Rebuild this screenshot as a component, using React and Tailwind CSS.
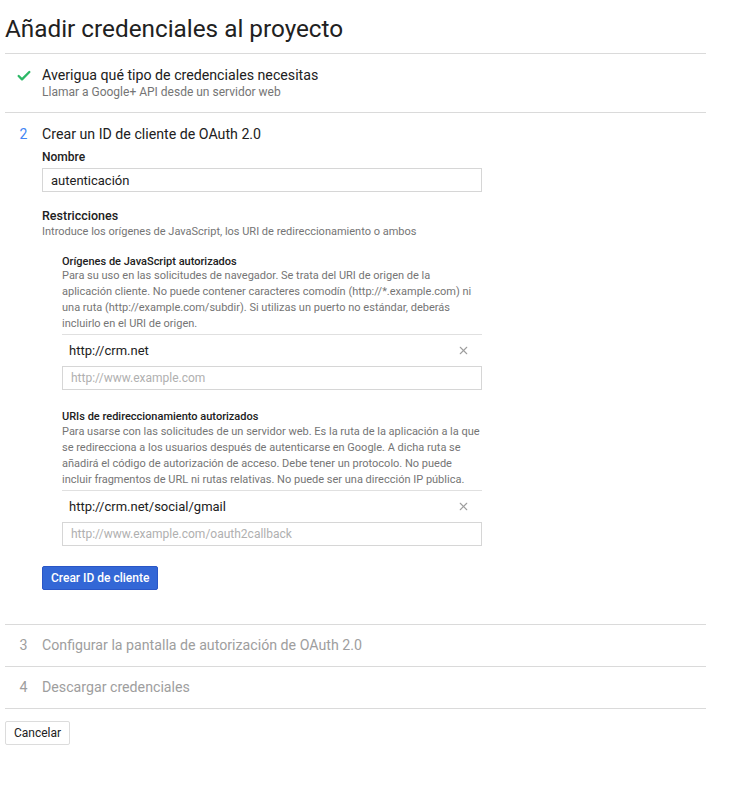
import { Check, X } from "lucide-react";

function UriList({ title, desc, value, placeholder, descGap }) {
  return (
    <div>
      <div className="text-[11px] font-medium text-[#212121] leading-[12px]">{title}</div>
      <p className={`text-[11px] text-[#757575] leading-[16px] ${descGap}`}>{desc}</p>
      <div className="mt-[2px] border-t border-[#e0e0e0] flex items-center justify-between h-[32px] pl-[7px] pr-[12px]">
        <span className="text-[13px] text-[#212121]">{value}</span>
        <X className="w-[13px] h-[13px] text-[#9e9e9e]" strokeWidth={2} />
      </div>
      <input
        className="block w-full h-[24px] border border-[#d6d6d6] px-[8px] text-[12px] outline-none placeholder:text-[#b0b0b0]"
        placeholder={placeholder}
      />
    </div>
  );
}

export default function App() {
  return (
    <div className="w-[737px] min-h-[787px] bg-white text-[#212121]" style={{ fontFamily: "Roboto, sans-serif" }}>
      <div className="w-[701px] ml-[5px]">
        <h1 className="text-[24.3px] leading-[28px] pt-[15px] pb-[10px] text-[#212121]">Añadir credenciales al proyecto</h1>

        <div className="border-t border-[#dadada] flex pt-[12px] pb-[11px]">
          <div className="w-[37px] flex justify-center pt-[2px]">
            <Check className="w-[16px] h-[16px] text-[#2cb866]" strokeWidth={3.5} />
          </div>
          <div>
            <div className="text-[14.2px] leading-[18px]">Averigua qué tipo de credenciales necesitas</div>
            <div className="text-[12px] leading-[17px] text-[#757575]">Llamar a Google+ API desde un servidor web</div>
          </div>
        </div>

        <div className="border-t border-[#dadada] flex pt-[12px] pb-[34px]">
          <div className="w-[37px] text-center text-[14px] leading-[18px] text-[#4285f4]">2</div>
          <div className="w-[440px]">
            <div className="text-[14.2px] leading-[18px]">Crear un ID de cliente de OAuth 2.0</div>
            <div className="text-[12px] font-medium leading-[16px] mt-[6px]">Nombre</div>
            <input
              defaultValue="autenticación"
              className="block mt-[3px] w-full h-[24px] border border-[#d6d6d6] px-[8px] text-[13px] outline-none text-[#212121]"
            />
            <div className="text-[12.5px] font-medium leading-[16px] mt-[16px]">Restricciones</div>
            <div className="text-[11px] text-[#757575] leading-[16px]">
              Introduce los orígenes de JavaScript, los URI de redireccionamiento o ambos
            </div>
            <div className="pl-[20px] mt-[16px]">
              <UriList
                title="Orígenes de JavaScript autorizados"
                desc="Para su uso en las solicitudes de navegador. Se trata del URI de origen de la aplicación cliente. No puede contener caracteres comodín (http://*.example.com) ni una ruta (http://example.com/subdir). Si utilizas un puerto no estándar, deberás incluirlo en el URI de origen."
                value="http://crm.net"
                placeholder="http://www.example.com"
                descGap="mt-0"
              />
              <div className="mt-[21px]">
                <UriList
                  title="URIs de redireccionamiento autorizados"
                  desc="Para usarse con las solicitudes de un servidor web. Es la ruta de la aplicación a la que se redirecciona a los usuarios después de autenticarse en Google. A dicha ruta se añadirá el código de autorización de acceso. Debe tener un protocolo. No puede incluir fragmentos de URL ni rutas relativas. No puede ser una dirección IP pública."
                  value="http://crm.net/social/gmail"
                  placeholder="http://www.example.com/oauth2callback"
                  descGap="mt-[1px]"
                />
              </div>
            </div>
            <button className="block mt-[20px] h-[24px] px-[8px] rounded-[2px] bg-[#3367d6] border border-[#2a56c6] text-white text-[12px] font-medium">
              Crear ID de cliente
            </button>
          </div>
        </div>

        <div className="border-t border-[#dadada] flex items-center h-[42px] text-[#9e9e9e] text-[14.2px]">
          <div className="w-[37px] text-center">3</div>
          <div>Configurar la pantalla de autorización de OAuth 2.0</div>
        </div>
        <div className="border-t border-[#dadada] flex items-center h-[42px] text-[#9e9e9e] text-[14.2px]">
          <div className="w-[37px] text-center">4</div>
          <div>Descargar credenciales</div>
        </div>
        <div className="border-t border-[#dadada] pt-[12px] flex">
          <button className="h-[24px] px-[8px] border border-[#dcdcdc] rounded-[2px] bg-white text-[12px] text-[#212121]">
            Cancelar
          </button>
        </div>
      </div>
    </div>
  );
}
